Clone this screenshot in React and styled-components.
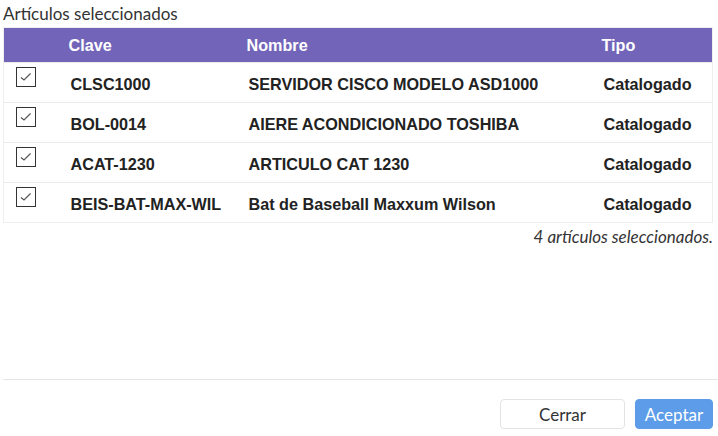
import styled, { createGlobalStyle } from "styled-components";

const GlobalStyle = createGlobalStyle`
  html, body {
    margin: 0;
    padding: 0;
    background: #fff;
  }
  body {
    font-family: Lato, "Open Sans", sans-serif;
    color: #333;
  }
`;

const items = [
  { clave: "CLSC1000", nombre: "SERVIDOR CISCO MODELO ASD1000", tipo: "Catalogado" },
  { clave: "BOL-0014", nombre: "AIERE ACONDICIONADO TOSHIBA", tipo: "Catalogado" },
  { clave: "ACAT-1230", nombre: "ARTICULO CAT 1230", tipo: "Catalogado" },
  { clave: "BEIS-BAT-MAX-WIL", nombre: "Bat de Baseball Maxxum Wilson", tipo: "Catalogado" },
];

const Page = styled.div`
  width: 718px;
  height: 436px;
  display: flex;
  flex-direction: column;
  box-sizing: border-box;
  padding: 0 0 0 3px;
`;

const Title = styled.div`
  font-size: 17px;
  line-height: 27px;
  color: #333;
`;

const Table = styled.table`
  width: 710px;
  table-layout: fixed;
  border-collapse: collapse;
  border: 1px solid #eee;
  font-family: "Liberation Sans", Arial, sans-serif;
  font-weight: bold;
  font-size: 16.2px;
  color: #222;
`;

const HeadCell = styled.th`
  box-sizing: border-box;
  background: #7265b9;
  color: #fff;
  text-align: left;
  height: 35px;
  padding: 0 0 0 10px;
  width: ${(p) => (p.$width ? `${p.$width}px` : "auto")};
  font-weight: bold;
`;

const Row = styled.tr`
  border-top: 1px solid #ebebeb;
  height: 40px;
`;

const Cell = styled.td`
  padding: 3px 0 0 12px;
  vertical-align: middle;
  white-space: nowrap;
`;

const CheckCell = styled.td`
  vertical-align: top;
  padding: 4px 0 0 12px;
`;

const Box = styled.span`
  display: block;
  width: 18px;
  height: 18px;
  border: 1px solid #333;
  background: #fff;
`;

const Note = styled.div`
  width: 710px;
  text-align: right;
  font-style: italic;
  font-size: 17px;
  line-height: 28px;
  color: #333;
`;

const Spacer = styled.div`
  flex: 1;
`;

const Divider = styled.div`
  border-top: 1px solid #e5e5e5;
  margin-bottom: 19px;
`;

const Footer = styled.div`
  display: flex;
  justify-content: flex-end;
  gap: 10px;
  width: 710px;
  margin-bottom: 7px;
`;

const Button = styled.button`
  height: 30px;
  width: ${(p) => p.$width}px;
  border-radius: 4px;
  font-family: Lato, "Open Sans", sans-serif;
  font-size: 17px;
  border: 1px solid ${(p) => (p.$primary ? "#5c9ce9" : "#e3e3e3")};
  background: ${(p) => (p.$primary ? "#5c9ce9" : "#fff")};
  color: ${(p) => (p.$primary ? "#fff" : "#333")};
  padding: 0;
`;

const Check = () => (
  <Box>
    <svg width="18" height="18" viewBox="0 0 18 18">
      <path d="M4 9.5 L7 12 L13.5 5.5" fill="none" stroke="#555" strokeWidth="1.2" />
    </svg>
  </Box>
);

export default function App() {
  return (
    <>
      <GlobalStyle />
      <Page>
        <Title>Artículos seleccionados</Title>
        <Table>
          <thead>
            <tr>
              <HeadCell $width={55} />
              <HeadCell $width={178}>Clave</HeadCell>
              <HeadCell $width={355}>Nombre</HeadCell>
              <HeadCell>Tipo</HeadCell>
            </tr>
          </thead>
          <tbody>
            {items.map((item) => (
              <Row key={item.clave}>
                <CheckCell>
                  <Check />
                </CheckCell>
                <Cell>{item.clave}</Cell>
                <Cell>{item.nombre}</Cell>
                <Cell>{item.tipo}</Cell>
              </Row>
            ))}
          </tbody>
        </Table>
        <Note>4 artículos seleccionados.</Note>
        <Spacer />
        <Divider />
        <Footer>
          <Button $width={125}>Cerrar</Button>
          <Button $primary $width={78}>Aceptar</Button>
        </Footer>
      </Page>
    </>
  );
}
